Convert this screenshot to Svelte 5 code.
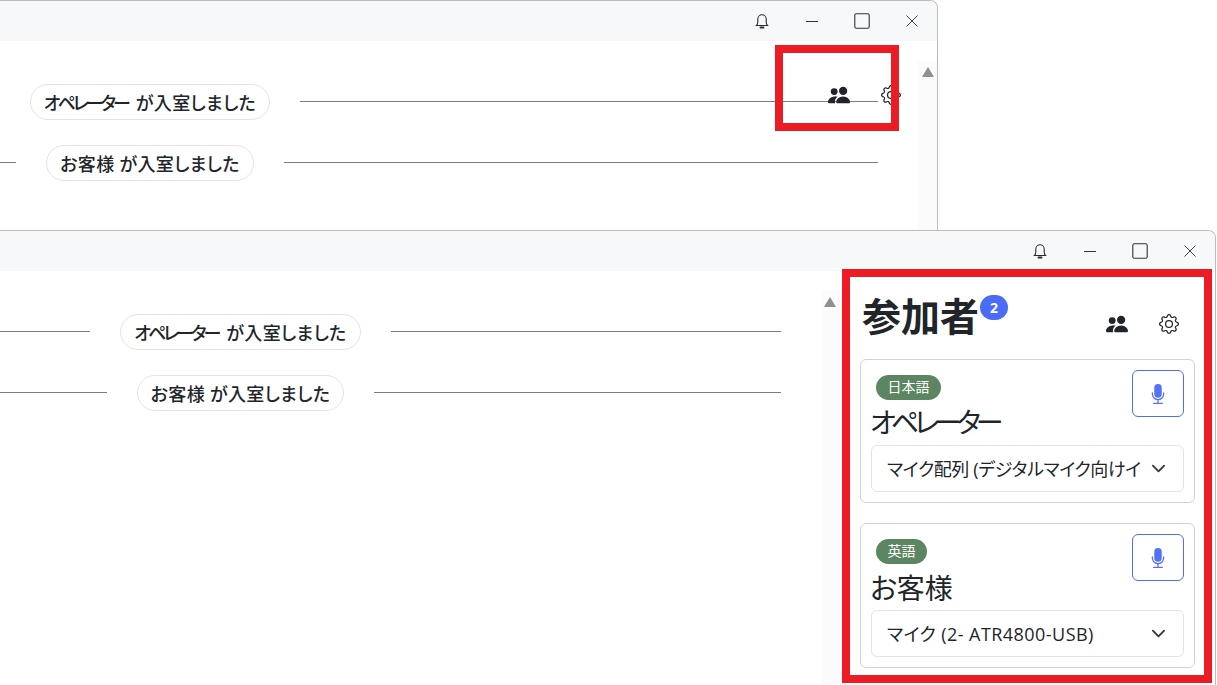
<script>
  const people = "M7 14s-1 0-1-1 1-4 5-4 5 3 5 4-1 1-1 1H7Zm4-6a3 3 0 1 0 0-6 3 3 0 0 0 0 6Zm-5.784 6A2.238 2.238 0 0 1 5 13c0-1.355.68-2.75 1.936-3.72A6.325 6.325 0 0 0 5 9c-4 0-5 3-5 4s1 1 1 1h4.216ZM4.5 8a2.5 2.5 0 1 0 0-5 2.5 2.5 0 0 0 0 5Z";
  const gear1 = "M8 4.754a3.246 3.246 0 1 0 0 6.492 3.246 3.246 0 0 0 0-6.492zM5.754 8a2.246 2.246 0 1 1 4.492 0 2.246 2.246 0 0 1-4.492 0z";
  const gear2 = "M9.796 1.343c-.527-1.79-3.065-1.79-3.592 0l-.094.319a.873.873 0 0 1-1.255.52l-.292-.16c-1.64-.892-3.433.902-2.54 2.541l.159.292a.873.873 0 0 1-.52 1.255l-.319.094c-1.79.527-1.79 3.065 0 3.592l.319.094a.873.873 0 0 1 .52 1.255l-.16.292c-.892 1.64.901 3.434 2.541 2.54l.292-.159a.873.873 0 0 1 1.255.52l.094.319c.527 1.79 3.065 1.79 3.592 0l.094-.319a.873.873 0 0 1 1.255-.52l.292.16c1.64.893 3.434-.902 2.54-2.541l-.159-.292a.873.873 0 0 1 .52-1.255l.319-.094c1.79-.527 1.79-3.065 0-3.592l-.319-.094a.873.873 0 0 1-.52-1.255l.16-.292c.893-1.64-.902-3.433-2.541-2.54l-.292.159a.873.873 0 0 1-1.255-.52l-.094-.319zm-2.633.283c.246-.835 1.428-.835 1.674 0l.094.319a1.873 1.873 0 0 0 2.693 1.115l.291-.16c.764-.415 1.6.42 1.184 1.185l-.159.292a1.873 1.873 0 0 0 1.116 2.692l.318.094c.835.246.835 1.428 0 1.674l-.319.094a1.873 1.873 0 0 0-1.115 2.693l.16.291c.415.764-.42 1.6-1.185 1.184l-.291-.159a1.873 1.873 0 0 0-2.693 1.116l-.094.318c-.246.835-1.428.835-1.674 0l-.094-.319a1.873 1.873 0 0 0-2.692-1.115l-.292.16c-.764.415-1.6-.42-1.184-1.185l.159-.291A1.873 1.873 0 0 0 1.945 8.93l-.319-.094c-.835-.246-.835-1.428 0-1.674l.319-.094A1.873 1.873 0 0 0 3.06 4.377l-.16-.292c-.415-.764.42-1.6 1.185-1.184l.292.159a1.873 1.873 0 0 0 2.692-1.115l.094-.319z";
  const mic1 = "M5 3a3 3 0 0 1 6 0v5a3 3 0 0 1-6 0V3z";
  const mic2 = "M3.5 6.5A.5.5 0 0 1 4 7v1a4 4 0 0 0 8 0V7a.5.5 0 0 1 1 0v1a5 5 0 0 1-4.500 4.975V15h3a.5.5 0 0 1 0 1h-7a.5.5 0 0 1 0-1h3v-2.025A5 5 0 0 1 3 8V7a.5.5 0 0 1 .5-.5z";

  const messages = [
    { who: "オペレーター", kana: true },
    { who: "お客様", kana: false }
  ];
  const participants = [
    { lang: "日本語", name: "オペレーター", kana: true, device: "マイク配列 (デジタルマイク向けイ" },
    { lang: "英語", name: "お客様", kana: false, device: "マイク (2- ATR4800-USB)" }
  ];
</script>

{#snippet titlebar()}
  <div class="titlebar">
    <span class="tb-btn">
      <svg width="16" height="18" viewBox="0 0 16 18" fill="none" stroke="#2b2b2b" stroke-width="1.1">
        <path d="M2.5 13.5c1-1 1.3-2 1.3-3.5V7a4.2 4.2 0 0 1 8.4 0v3c0 1.500.3 2.500 1.300 3.500z" />
        <path d="M6.500 15.500h3" stroke-width="1.800" stroke-linecap="round" />
      </svg>
    </span>
    <span class="tb-btn">
      <svg width="12" height="12" viewBox="0 0 12 12" fill="none" stroke="#333" stroke-width="1"><path d="M0 6.500h12" /></svg>
    </span>
    <span class="tb-btn">
      <svg width="16" height="16" viewBox="0 0 16 16" fill="none" stroke="#333" stroke-width="1.100"><rect x=".8" y=".8" width="14.400" height="14.400" rx="1.500" /></svg>
    </span>
    <span class="tb-btn">
      <svg width="12" height="12" viewBox="0 0 12 12" fill="none" stroke="#444" stroke-width="1"><path d="M.5.5l11 11M11.500.5l-11 11" /></svg>
    </span>
  </div>
{/snippet}

{#snippet tools()}
  <svg class="tool" width="22" height="22" viewBox="0 0 16 16" fill="#212529"><path d={people} /></svg>
  <svg class="tool" width="20" height="20" viewBox="0 0 16 16" fill="#212529"><path d={gear1} /><path d={gear2} /></svg>
{/snippet}

{#snippet chat()}
  {#each messages as m}
    <div class="msg">
      <span class="line"></span>
      <span class="pill"><span class:kana={m.kana}>{m.who}</span>&nbsp;が入室しました</span>
      <span class="line"></span>
    </div>
  {/each}
{/snippet}

<div class="page">
  <section class="window first">
    {@render titlebar()}
    <div class="body">
      <div class="chat">{@render chat()}</div>
      <div class="scroll"><span class="arrow"></span></div>
    </div>
    <div class="floating">{@render tools()}</div>
  </section>

  <section class="window second">
    {@render titlebar()}
    <div class="body">
      <div class="chat">{@render chat()}</div>
      <div class="scroll"><span class="arrow"></span></div>
      <aside class="panel">
        <header class="panel-head">
          <h1>参加者</h1>
          <span class="count">2</span>
          <div class="panel-tools">{@render tools()}</div>
        </header>
        {#each participants as p}
          <div class="card">
            <div class="card-top">
              <div>
                <span class="lang">{p.lang}</span>
                <div class="name" class:kana-lg={p.kana}>{p.name}</div>
              </div>
              <button class="mic" aria-label="mic">
                <svg width="20" height="20" viewBox="0 0 16 16" fill="#5472f6"><path d={mic1} /><path d={mic2} /></svg>
              </button>
            </div>
            <div class="select">
              <span class="device" class:tight={p.kana}>{p.device}</span>
              <svg class="chev" width="15" height="15" viewBox="0 0 16 16" fill="none" stroke="#343a40" stroke-width="2" stroke-linecap="round" stroke-linejoin="round"><path d="m2 5 6 6 6-6" /></svg>
            </div>
          </div>
        {/each}
      </aside>
    </div>
  </section>

  <div class="mark mark-a"></div>
  <div class="mark mark-b"></div>
</div>

<style>
  :global(body) {
    margin: 0;
    background: #fff;
    font-family: "Open Sans", "Noto Sans CJK JP", sans-serif;
    color: #212529;
  }
  .page {
    position: relative;
    width: 1217px;
    height: 685px;
    overflow: hidden;
  }
  .window {
    position: relative;
    box-sizing: border-box;
    border: 1px solid #bcbcbc;
    border-left: 0;
    border-bottom: 0;
    border-top-right-radius: 8px;
    background: #fff;
    overflow: hidden;
  }
  .first {
    width: 938px;
    height: 230px;
  }
  .second {
    width: 1216px;
    height: 455px;
  }
  .titlebar {
    display: flex;
    justify-content: flex-end;
    align-items: center;
    height: 40px;
    background: #f6f8fa;
  }
  .tb-btn {
    display: flex;
    justify-content: center;
    align-items: center;
    width: 50px;
    height: 40px;
  }
  .body {
    display: flex;
  }
  .chat {
    padding-top: 43px;
    display: flex;
    flex-direction: column;
    gap: 25px;
  }
  .first .chat {
    width: 1456px;
    margin-left: -578px;
    margin-right: 40px;
    flex: none;
  }
  .second .chat {
    width: 1081px;
    margin-left: -300px;
    margin-right: 41px;
    flex: none;
  }
  .msg {
    display: flex;
    align-items: center;
    gap: 30px;
  }
  .line {
    flex: 1;
    height: 1px;
    background: #7d7d7d;
    margin-top: -1px;
  }
  .pill {
    box-sizing: border-box;
    height: 36px;
    padding: 0 13px 1px;
    display: flex;
    align-items: center;
    border: 1px solid #e2e3ea;
    border-radius: 18px;
    font-size: 18px;
    font-weight: 500;
    letter-spacing: .35px;
    font-feature-settings: "palt";
    white-space: nowrap;
  }
  .kana {
    letter-spacing: -3px;
    margin-right: 3px;
  }
  .scroll {
    flex: none;
    width: 20px;
    margin-top: 20px;
    height: 400px;
    background: #fbfbfb;
    display: flex;
    justify-content: center;
    padding-top: 6px;
    box-sizing: border-box;
  }
  .second .scroll {
    padding-right: 4px;
  }
  .arrow {
    width: 0;
    height: 0;
    border-left: 6.5px solid transparent;
    border-right: 6.5px solid transparent;
    border-bottom: 10px solid #8f8f8f;
  }
  .floating {
    position: absolute;
    left: 828px;
    top: 83px;
    display: flex;
    align-items: center;
    gap: 31px;
  }
  .panel {
    flex: none;
    width: 335px;
    margin-left: 18px;
  }
  .panel-head {
    display: flex;
    align-items: flex-start;
    height: 88px;
    padding-left: 2px;
    position: relative;
  }
  h1 {
    margin: 19px 0 0;
    font-size: 39px;
    line-height: 52px;
    font-weight: 700;
    font-feature-settings: "palt";
  }
  .count {
    margin: 24px 0 0 1px;
    width: 28px;
    height: 25px;
    border-radius: 13px;
    background: #4a6cf7;
    color: #fff;
    font-size: 14px;
    font-weight: 700;
    display: flex;
    align-items: center;
    justify-content: center;
  }
  .panel-tools {
    position: absolute;
    left: 246px;
    top: 42px;
    display: flex;
    align-items: center;
    gap: 31px;
  }
  .card {
    box-sizing: border-box;
    height: 144px;
    margin-bottom: 20px;
    padding: 10px;
    border: 1px solid #d2d3d6;
    border-radius: 6px;
  }
  .card + .card {
    height: 145px;
  }
  .card-top {
    display: flex;
    justify-content: space-between;
    align-items: flex-start;
    height: 75px;
  }
  .card + .card .card-top {
    height: 76px;
  }
  .lang {
    box-sizing: border-box;
    display: inline-flex;
    align-items: center;
    height: 25px;
    margin: 5px 0 0 5px;
    padding: 0 11.5px 3px;
    border-radius: 13px;
    background: #5b8661;
    color: #fff;
    font-size: 14px;
  }
  .name {
    font-size: 28px;
    line-height: 40px;
    margin-top: 2px;
    margin-left: -1px;
    font-feature-settings: "palt";
    white-space: nowrap;
  }
  .card + .card .name {
    margin-top: 4px;
  }
  .kana-lg {
    letter-spacing: -5px;
  }
  .mic {
    box-sizing: border-box;
    width: 52px;
    height: 47px;
    padding: 0;
    background: #fff;
    border: 1px solid #4f6ef7;
    border-radius: 6px;
    display: flex;
    align-items: center;
    justify-content: center;
  }
  .select {
    box-sizing: border-box;
    height: 47px;
    display: flex;
    align-items: center;
    position: relative;
    padding: 0 44px 2px 15px;
    border: 1px solid #e2e3ea;
    border-radius: 6px;
    font-size: 18px;
    font-feature-settings: "palt";
  }
  .device {
    white-space: nowrap;
    letter-spacing: .45px;
  }
  .device.tight {
    letter-spacing: -.35px;
  }
  .chev {
    position: absolute;
    right: 17px;
    top: 15px;
  }
  .mark {
    position: absolute;
    box-sizing: border-box;
    border: 8px solid #ed1c24;
  }
  .mark-a {
    left: 775px;
    top: 45px;
    width: 124px;
    height: 86px;
  }
  .mark-b {
    left: 842px;
    top: 269px;
    width: 370px;
    height: 414px;
  }
</style>
